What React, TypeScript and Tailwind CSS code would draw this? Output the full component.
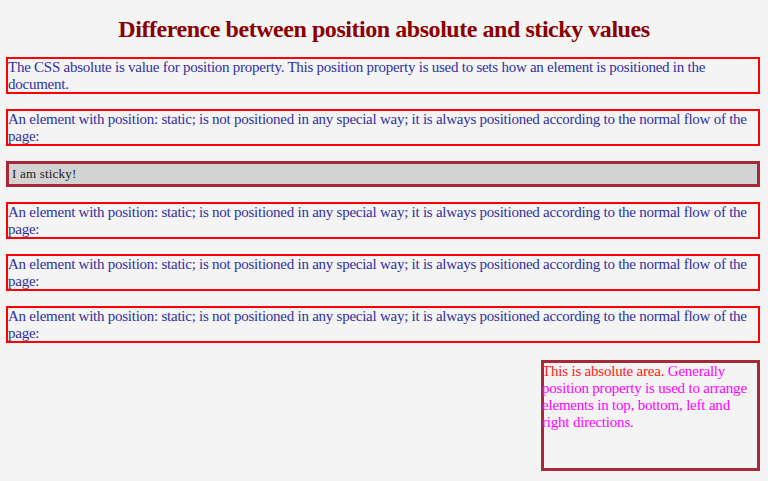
const para =
  "An element with position: static; is not positioned in any special way; it is always positioned according to the normal flow of the page:";

function Box({ children }: { children: React.ReactNode }) {
  return (
    <div className="border-2 border-[#ff0000] text-[15px] tracking-[-0.25px] leading-[16.5px] text-[#3030a0]">
      {children}
    </div>
  );
}

export default function App() {
  return (
    <div className="min-h-[481px] bg-[#f4f4f4] font-['Liberation_Serif',serif] px-[6px] pb-4 overflow-hidden">
      <h2 className="pt-[15px] pb-[14px] text-center text-[24px] tracking-[-0.45px] font-bold leading-[28px] text-[#8b0000]">
        Difference between position absolute and sticky values
      </h2>
      <div className="w-[754px] flex flex-col gap-[15px]">
        <Box>
          The CSS absolute is value for position property. This position property is used to sets how an
          element is positioned in the document.
        </Box>
        <Box>{para}</Box>
        <div className="border-[3px] border-[#a52a36] bg-[#d3d3d3] px-[3px] py-[2px] text-[13px] tracking-[0.2px] leading-[16px] text-[#222]">
          I am sticky!
        </div>
        <Box>{para}</Box>
        <Box>{para}</Box>
        <Box>{para}</Box>
        <div className="flex justify-end mt-[2px]">
          <div className="w-[219px] h-[111px] border-[3px] border-[#a52a36] text-[15px] tracking-[-0.2px] leading-[17px] text-[#ff00ff]">
            <div className="-ml-[2px]">
              <span className="text-[#ff2020]">This is absolute area.</span> Generally position property is
              used to arrange elements in top, bottom, left and right directions.
            </div>
          </div>
        </div>
      </div>
    </div>
  );
}
